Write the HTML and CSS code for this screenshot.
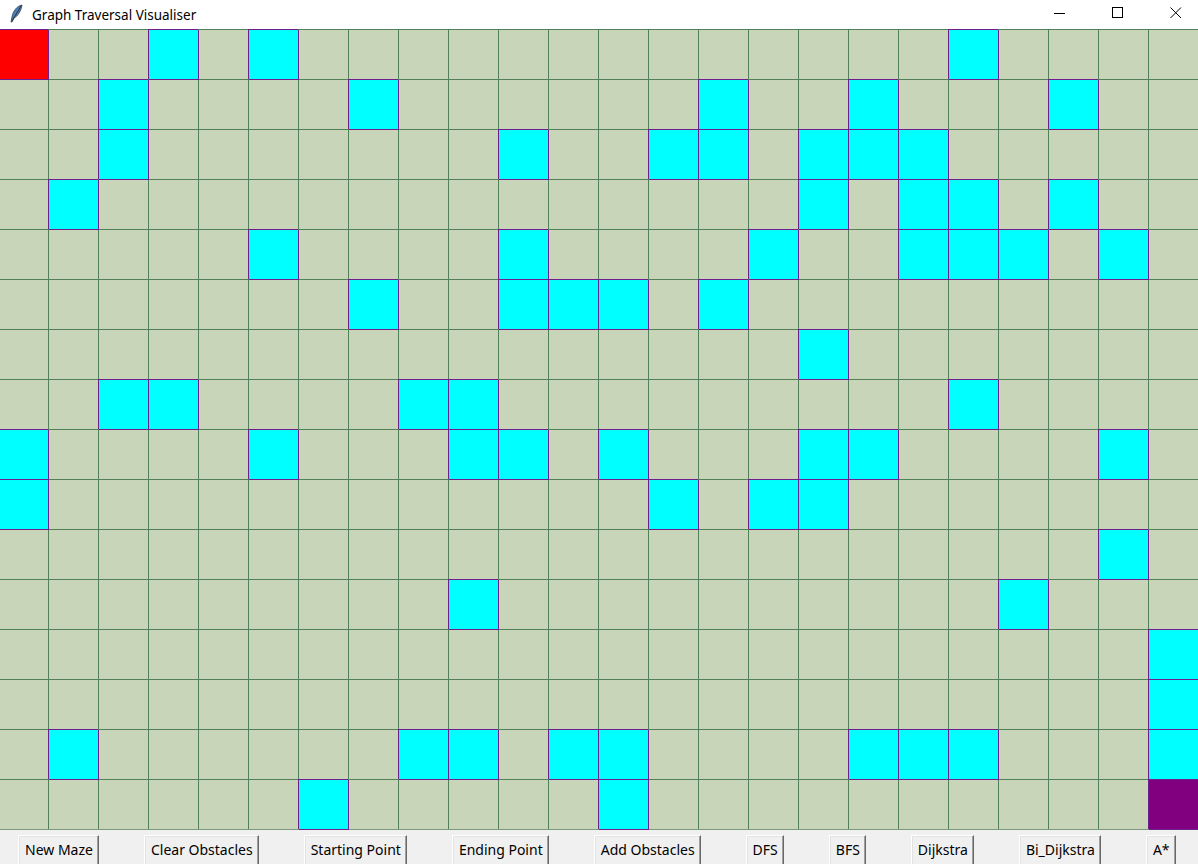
FILE: index.html
```html
<!DOCTYPE html>
<html lang="en">
<head>
  <meta charset="UTF-8">
  <title>Graph Traversal Visualiser</title>
  <link rel="stylesheet" href="styles.css">
</head>
<body>

  <header class="titlebar">
    <div class="title">
      <svg class="feather" width="14" height="20" viewBox="0 0 14 20">
        <path d="M13 1 C8 2 4 7 3 13 L2 18 L3 18 L5 14 C9 12 12 7 13 1 Z" fill="#4f7fb8" stroke="#2c3e55" stroke-width="0.8"/>
        <path d="M12 2 L3 17" stroke="#1e2a38" stroke-width="0.9"/>
      </svg>
      <span>Graph Traversal Visualiser</span>
    </div>
    <div class="controls">
      <svg width="12" height="12" viewBox="0 0 12 12"><path d="M0 6.5 H11" stroke="#000" stroke-width="1"/></svg>
      <svg width="12" height="12" viewBox="0 0 12 12"><rect x="0.5" y="0.5" width="10" height="10" fill="none" stroke="#000" stroke-width="1"/></svg>
      <svg width="12" height="12" viewBox="0 0 12 12"><path d="M0.5 0.5 L11 11 M11 0.5 L0.5 11" stroke="#000" stroke-width="1"/></svg>
    </div>
  </header>

  <div class="board" id="board"></div>

  <div class="toolbar">
    <button>New Maze</button>
    <button>Clear Obstacles</button>
    <button>Starting Point</button>
    <button>Ending Point</button>
    <button>Add Obstacles</button>
    <button>DFS</button>
    <button>BFS</button>
    <button>Dijkstra</button>
    <button>Bi_Dijkstra</button>
    <button>A*</button>
  </div>

  <script>
    // obstacle columns for each row
    const walls = [
      [3, 5, 19],
      [2, 7, 14, 17, 21],
      [2, 10, 13, 14, 16, 17, 18],
      [1, 16, 18, 19, 21],
      [5, 10, 15, 18, 19, 20, 22],
      [7, 10, 11, 12, 14],
      [16],
      [2, 3, 8, 9, 19],
      [0, 5, 9, 10, 12, 16, 17, 22],
      [0, 13, 15, 16],
      [22],
      [9, 20],
      [23],
      [23],
      [1, 8, 9, 11, 12, 17, 18, 19, 23],
      [6, 12]
    ];

    const board = document.getElementById("board");

    walls.forEach((row, r) => {
      for (let c = 0; c < 24; c++) {
        const cell = document.createElement("div");
        cell.className = "cell";
        if (r === 0 && c === 0) cell.classList.add("start");
        else if (r === 15 && c === 23) cell.classList.add("end");
        else if (row.includes(c)) cell.classList.add("wall");
        board.appendChild(cell);
      }
    });
  </script>

</body>
</html>
```

FILE: styles.css
```css
* {
  box-sizing: border-box;
  margin: 0;
  padding: 0;
}

body {
  width: 1198px;
  height: 864px;
  overflow: hidden;
  background: #f0f0f0;
  font-family: 'Noto Sans', 'DejaVu Sans', sans-serif;
}

.titlebar {
  height: 30px;
  background: #fff;
  display: flex;
  justify-content: space-between;
  align-items: center;
}

.title {
  display: flex;
  align-items: center;
  gap: 9px;
  padding-left: 9px;
  font-size: 13.5px;
  color: #000;
}

.feather {
  margin-top: -2px;
}

.controls {
  display: flex;
  gap: 46px;
  padding-right: 16px;
  margin-top: -4px;
}

.board {
  display: grid;
  grid-template-columns: repeat(24, 50px);
  grid-auto-rows: 50px;
  margin-left: -2px;
  margin-top: -1px;
  width: 1200px;
}

.cell {
  background: #c8d5b9;
  box-shadow: inset 1px 1px 0 #52805a;
}

.cell.wall,
.cell.start,
.cell.end {
  position: relative;
  z-index: 1;
  box-shadow: inset 1px 1px 0 #6e1f8c, 1px 1px 0 #6e1f8c;
}

.cell.wall {
  background: #00ffff;
}

.cell.start {
  background: #ff0000;
}

.cell.end {
  background: #800080;
}

.toolbar {
  display: flex;
  gap: 45px;
  padding: 5px 0 0 18px;
  border-top: 1px solid #7d9a80;
}

.toolbar button {
  flex-shrink: 0;
  white-space: nowrap;
  height: 32px;
  padding: 0 5px 4px 6px;
  font-family: 'Noto Sans', 'DejaVu Sans', sans-serif;
  font-size: 14px;
  color: #000;
  background: #f0f0f0;
  border: 1px solid;
  border-color: #ffffff #696969 #696969 #ffffff;
  box-shadow: inset -1px 0 0 #a0a0a0, inset 1px 1px 0 #e3e3e3;
}
```
